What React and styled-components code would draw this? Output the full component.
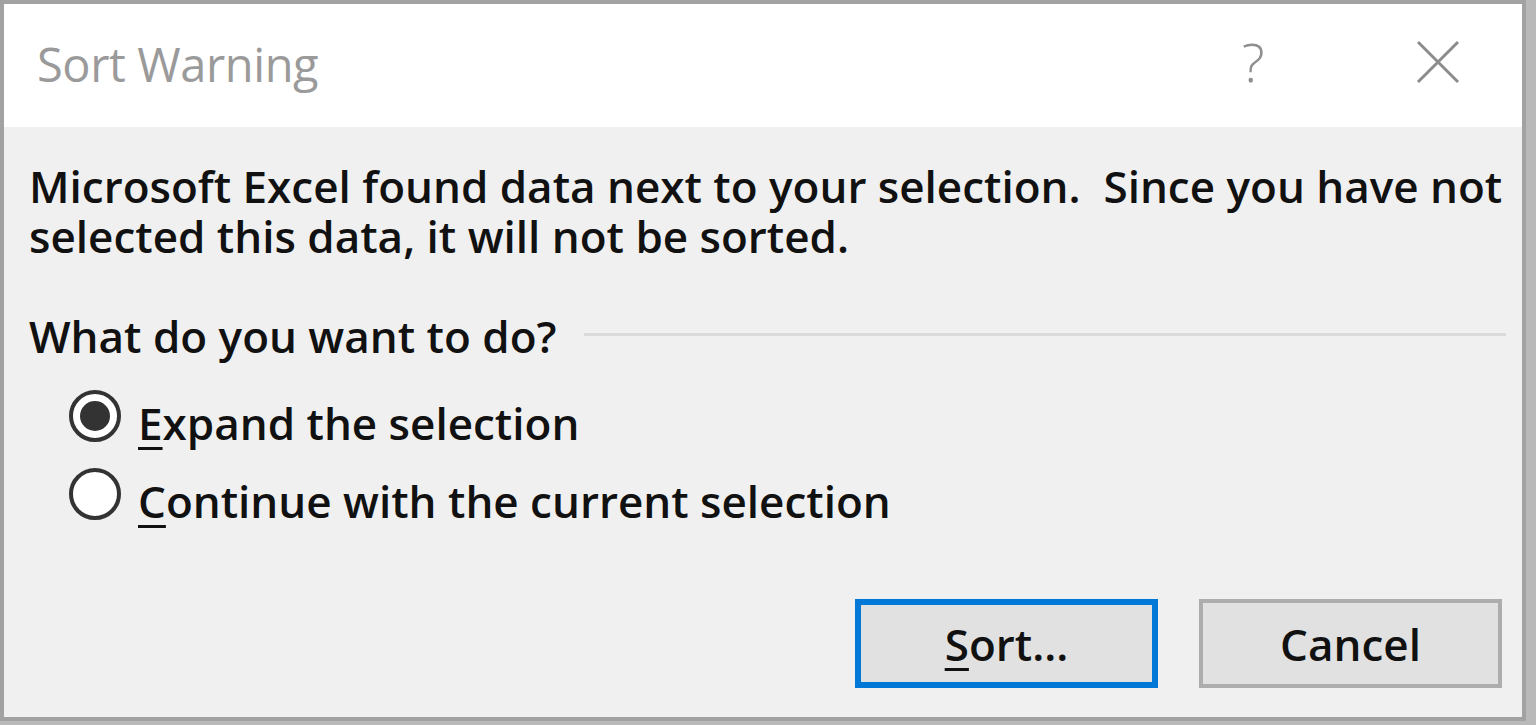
import React from "react";
import styled, { createGlobalStyle } from "styled-components";

const Global = createGlobalStyle`
  html, body { margin: 0; padding: 0; }
  body {
    background: #b9b9b9;
    width: 1536px;
    height: 725px;
    overflow: hidden;
    font-family: "Open Sans", "Noto Sans", sans-serif;
  }
`;

const Dialog = styled.div`
  box-sizing: border-box;
  width: 1526px;
  height: 721px;
  border: 4px solid #a2a2a2;
  background: #f0f0f0;
  display: flex;
  flex-direction: column;
`;

const TitleBar = styled.div`
  height: 123px;
  background: #ffffff;
  display: flex;
  align-items: center;
  padding: 0 0 4px 33px;
  box-sizing: border-box;
`;

const Title = styled.div`
  flex: 1;
  font-size: 47px;
  color: #9a9a9a;
  letter-spacing: -0.4px;
`;

const Help = styled.div`
  font-size: 54px;
  font-weight: 300;
  color: #8f8f8f;
  width: 30px;
  text-align: center;
  margin-right: 148px;
  margin-top: -6px;
`;

const Close = styled.svg`
  width: 44px;
  height: 44px;
  margin-right: 62px;
  margin-top: -4px;
`;

const Body = styled.div`
  flex: 1;
  display: flex;
  flex-direction: column;
  padding: 34px 16px 29px 25px;
  font-size: 44px;
  line-height: 50px;
  color: #111;
  font-weight: 570;
`;

const Message = styled.div`
  white-space: pre;
  margin-bottom: 50px;
`;

const GroupHeader = styled.div`
  display: flex;
  align-items: flex-start;
  margin-bottom: 23px;
`;

const Rule = styled.div`
  flex: 1;
  height: 3px;
  background: #dadada;
  margin: 22px 0 0 28px;
`;

const Option = styled.label`
  display: flex;
  align-items: center;
  height: 78px;
  padding-left: 40px;
  gap: 17px;
`;

const Radio = styled.span`
  box-sizing: border-box;
  width: 52px;
  height: 52px;
  border-radius: 50%;
  border: 4px solid #333;
  background: #fff;
  display: flex;
  align-items: center;
  justify-content: center;
  margin-top: -14px;
  &::after {
    content: "";
    width: 30px;
    height: 30px;
    border-radius: 50%;
    background: ${(p) => (p.$checked ? "#333" : "transparent")};
  }
`;

const Key = styled.u`
  text-decoration-thickness: 3px;
  text-underline-offset: 7px;
`;

const Buttons = styled.div`
  margin-top: auto;
  display: flex;
  justify-content: flex-end;
  gap: 41px;
  padding-right: 4px;
`;

const Button = styled.button`
  box-sizing: border-box;
  width: 303px;
  height: 89px;
  background: #e1e1e1;
  border: ${(p) => (p.$default ? "6px solid #0078d7" : "4px solid #adadad")};
  font-family: inherit;
  font-size: 44px;
  font-weight: 570;
  color: #111;
  padding: 0;
  display: flex;
  align-items: center;
  justify-content: center;
`;

export default function App() {
  return (
    <>
      <Global />
      <Dialog>
        <TitleBar>
          <Title>Sort Warning</Title>
          <Help>?</Help>
          <Close viewBox="0 0 44 44">
            <path d="M2 2 L42 42 M42 2 L2 42" stroke="#8c8c8c" strokeWidth="3" fill="none" />
          </Close>
        </TitleBar>
        <Body>
          <Message>
            {"Microsoft Excel found data next to your selection.  Since you have not\nselected this data, it will not be sorted."}
          </Message>
          <GroupHeader>
            <span>What do you want to do?</span>
            <Rule />
          </GroupHeader>
          <Option>
            <Radio $checked />
            <span><Key>E</Key>xpand the selection</span>
          </Option>
          <Option>
            <Radio />
            <span><Key>C</Key>ontinue with the current selection</span>
          </Option>
          <Buttons>
            <Button $default><span><Key>S</Key>ort...</span></Button>
            <Button>Cancel</Button>
          </Buttons>
        </Body>
      </Dialog>
    </>
  );
}
